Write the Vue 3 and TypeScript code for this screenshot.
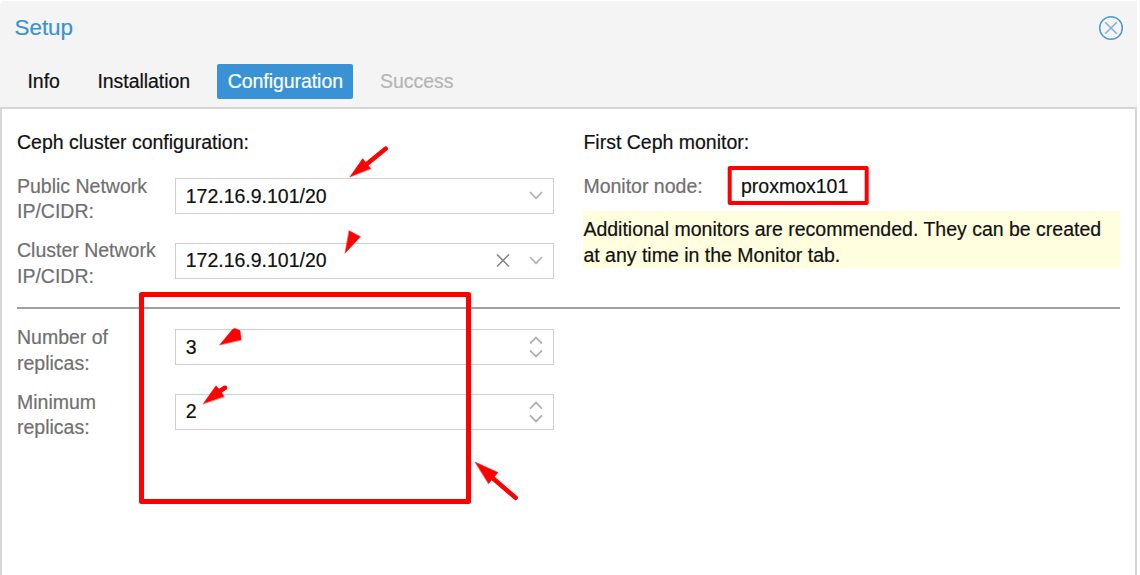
<script setup lang="ts">
import { ref } from 'vue'

interface Tab { label: string; state?: 'active' | 'disabled' }
interface Field { label: [string, string]; value: string; clearable?: boolean }

const tabs: Tab[] = [
  { label: 'Info' },
  { label: 'Installation' },
  { label: 'Configuration', state: 'active' },
  { label: 'Success', state: 'disabled' },
]
const networks = ref<Field[]>([
  { label: ['Public Network', 'IP/CIDR:'], value: '172.16.9.101/20' },
  { label: ['Cluster Network', 'IP/CIDR:'], value: '172.16.9.101/20', clearable: true },
])
const replicas = ref<Field[]>([
  { label: ['Number of', 'replicas:'], value: '3' },
  { label: ['Minimum', 'replicas:'], value: '2' },
])
</script>

<template>
  <div class="window">
    <header class="header">
      <div class="titlebar">
        <span class="title">Setup</span>
        <svg class="close" width="26" height="26" viewBox="0 0 26 26">
          <circle cx="13" cy="13" r="11.3" />
          <path d="M7.2 7.2 18.8 18.8M18.8 7.2 7.2 18.8" />
        </svg>
      </div>
      <nav class="tabs">
        <span v-for="t in tabs" :key="t.label" class="tab" :class="t.state">{{ t.label }}</span>
      </nav>
    </header>

    <main class="body">
      <div class="columns">
        <section class="left">
          <div class="heading">Ceph cluster configuration:</div>
          <div v-for="f in networks" :key="f.label[0]" class="row">
            <div class="label">{{ f.label[0] }}<br />{{ f.label[1] }}</div>
            <div class="input">
              <span class="value">{{ f.value }}</span>
              <svg v-if="f.clearable" class="clear" width="14" height="14" viewBox="0 0 14 14"><path d="M1 .5 13 12.5M13 .5 1 12.5" /></svg>
              <svg class="arrow" width="14" height="10" viewBox="0 0 14 10"><path d="M1 1 7 7.3 13 1" /></svg>
            </div>
          </div>
        </section>
        <section class="right">
          <div class="heading">First Ceph monitor:</div>
          <div class="monitor">
            <span class="label">Monitor node:</span>
            <span class="node">proxmox101</span>
          </div>
          <div class="hint">Additional monitors are recommended. They can be created<br />at any time in the Monitor tab.</div>
        </section>
      </div>
      <div class="rule"></div>
      <section class="left lower">
        <div v-for="f in replicas" :key="f.label[0]" class="row">
          <div class="label">{{ f.label[0] }}<br />{{ f.label[1] }}</div>
          <div class="input">
            <span class="value">{{ f.value }}</span>
            <svg class="arrow" width="14" height="22" viewBox="0 0 14 22"><path d="M1 7.7 7 1.5 13 7.7M1 14.3 7 20.5 13 14.3" /></svg>
          </div>
        </div>
      </section>
    </main>

    <svg class="marks" width="1137" height="575" viewBox="0 0 1137 575">
      <rect x="141.5" y="294.5" width="327" height="207" stroke-width="5" />
      <rect x="729.7" y="168" width="137" height="35" stroke-width="4" />
      <path class="shaft" d="M365 165.5 385.6 148.8M217 393 225 387.8M492 477.5 515.6 497.8" />
      <path class="head" d="M350 176.7 362.7 158.6 366 163 370.7 168.5Z" />
      <path class="head" d="M349.2 230.8 360.4 236.7 345.2 253Z" />
      <path class="head" d="M219.8 344.7 232 330 234.5 328.3 240 330.6 241.2 339.8Z" />
      <path class="head" d="M203.4 403.5 216 385.8 220 390 224 396.6Z" />
      <path class="head" d="M475.3 462.2 498 472.4 488.6 483.5Z" />
    </svg>
  </div>
</template>

<style>
body { background: #fff; overflow: hidden; }
</style>

<style scoped>
.window {
  position: relative;
  box-sizing: border-box;
  width: 1137px;
  height: 575px;
  padding-top: 1px;
  overflow: hidden;
  display: flex;
  flex-direction: column;
  background: #fff;
  font-family: "Liberation Sans", Arial, sans-serif;
  font-size: 19.5px;
  line-height: 25.6px;
  color: #111;
  -webkit-text-stroke-width: 0.2px;
}
.header {
  height: 106px;
  flex: none;
  background: #f4f4f4;
  border-top-left-radius: 4px;
}
.titlebar {
  display: flex;
  justify-content: space-between;
  align-items: center;
  height: 54px;
  padding: 0 12.7px 0 14.5px;
}
.title { font-size: 22.4px; color: #3892d4; }
.close { fill: none; stroke: #4f9ad2; stroke-width: 1.5; }
.close path { stroke: #7fb0da; }
.tabs { display: flex; padding: 9px 0 0 16.5px; gap: 15.6px; }
.tab {
  box-sizing: border-box;
  height: 34.5px;
  line-height: 35px;
  padding: 0 11px;
  border-radius: 2px;
  letter-spacing: -0.05px;
}
.tab.active { background: #3892d4; color: #fff; padding-right: 10.5px; }
.tab.disabled { color: #b5b5b5; }
.body {
  flex: 1;
  box-sizing: border-box;
  border: 2px solid #d6d6d6;
  border-bottom: 0;
  padding: 21px 15px 0 15px;
}
.columns { display: flex; justify-content: space-between; height: 177px; }
.left { width: 536.7px; }
.right { width: 536.6px; }
.heading { height: 43.3px; }
.row { display: flex; justify-content: space-between; height: 64.4px; }
.label { color: #707070; }
.row .label { padding-top: 0.5px; }
.input {
  box-sizing: border-box;
  display: flex;
  align-items: center;
  width: 379px;
  height: 36px;
  margin-top: 5px;
  padding: 0 10px;
  border: 1.5px solid #cfcfcf;
  background: #fff;
}
.value { flex: 1; }
.arrow, .clear { fill: none; stroke: #b0b0b0; stroke-width: 1.8; }
.clear { stroke: #858585; stroke-width: 1.6; margin-right: 19px; }
.monitor { display: flex; box-sizing: border-box; height: 38px; padding-top: 0.6px; }
.monitor .label { width: 157.6px; }
.hint {
  box-sizing: border-box;
  height: 57px;
  padding-top: 5.5px;
  line-height: 25.8px;
  background: #ffffe0;
}
.rule { height: 2px; background: #a0a0a0; margin-right: -0.3px; }
.lower { padding-top: 15.6px; }
.lower .label { padding-top: 0.8px; }
.lower .input { margin-top: 4.8px; }
.marks { position: absolute; left: 0; top: 0; fill: none; stroke: #f00; stroke-linejoin: round; stroke-linecap: round; }
.shaft { stroke-width: 4.6; }
.head { fill: #f00; stroke: #f00; stroke-width: 0.5; }
</style>
